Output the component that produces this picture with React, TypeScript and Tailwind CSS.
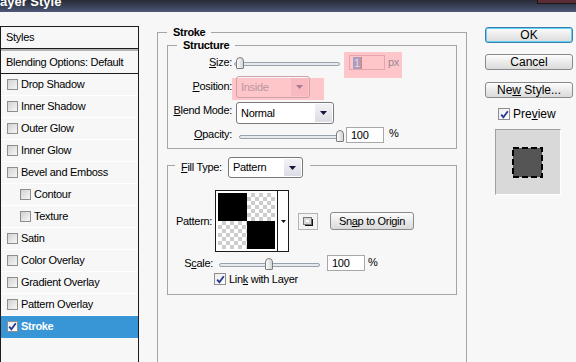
import React from "react";

function Check({ checked, className = "" }: { checked?: boolean; className?: string }) {
  return (
    <div
      className={`flex items-center justify-center border border-[#8e8e8e] ${
        checked ? "bg-linear-to-br from-[#ececec] to-[#ffffff]" : "bg-linear-to-br from-[#d2d2d2] to-[#f7f7f7]"
      } ${className}`}
    >
      {checked && (
        <svg width="9" height="9" viewBox="0 0 9 9">
          <path d="M1.2 4.6 L3.4 7.2 L7.8 1.2" fill="none" stroke="#24389a" strokeWidth="1.8" />
        </svg>
      )}
    </div>
  );
}

function Dropdown({ text, className = "", disabled }: { text: string; className?: string; disabled?: boolean }) {
  return (
    <div
      className={`flex items-stretch border rounded-[3px] ${
        disabled ? "border-[#d2a2aa] text-[#b9969f]" : "border-[#7a7a7a] bg-white"
      } ${className}`}
    >
      <div className="flex-1 flex items-center pl-[4px]">{text}</div>
      <div
        className={`w-[17px] my-[1px] mr-[1px] flex items-center justify-center ${
          disabled ? "bg-[#f9b9c1]" : "bg-linear-to-b from-[#f2f2f6] to-[#dcdce4]"
        }`}
      >
        <svg width="7" height="4" viewBox="0 0 7 4">
          <path d="M0 0 H7 L3.5 4 Z" fill={disabled ? "#a57d9a" : "#14143c"} />
        </svg>
      </div>
    </div>
  );
}

function Slider({ className, thumb }: { className: string; thumb: string }) {
  return (
    <div className={`relative h-[12px] ${className}`}>
      <div className="absolute left-0 right-0 top-[5px] h-[4px] rounded-full border border-[#97a2ad] bg-[#e6e9ed]" />
      <div
        className={`absolute top-0 w-[8px] h-[12px] rounded-t-[4px] rounded-b-[1px] border border-[#7c7c7c] bg-linear-to-r from-[#fbfbfb] to-[#d4d4d4] ${thumb}`}
      />
    </div>
  );
}

function Button({ children, className = "", focused }: { children: React.ReactNode; className?: string; focused?: boolean }) {
  return (
    <div
      className={`flex items-center justify-center rounded-[3px] border bg-linear-to-b from-[#fcfcfc] to-[#dadada] ${
        focused ? "border-[#3d7fae] shadow-[inset_0_0_0_1px_#5fd2f6]" : "border-[#8a8a8a]"
      } ${className}`}
    >
      {children}
    </div>
  );
}

const rows: { t: string; indent?: boolean; active?: boolean }[] = [
  { t: "Drop Shadow" },
  { t: "Inner Shadow" },
  { t: "Outer Glow" },
  { t: "Inner Glow" },
  { t: "Bevel and Emboss" },
  { t: "Contour", indent: true },
  { t: "Texture", indent: true },
  { t: "Satin" },
  { t: "Color Overlay" },
  { t: "Gradient Overlay" },
  { t: "Pattern Overlay" },
  { t: "Stroke", active: true },
];

export default function App() {
  return (
    <div className="w-[576px] h-[362px] overflow-hidden bg-[#f7f7f7] flex flex-col font-['Liberation_Sans',Arial,sans-serif] text-[11px] leading-[13px] text-black">
      {/* title bar */}
      <div className="h-[12px] shrink-0 bg-linear-to-b from-[#252a35] to-[#4e5877] overflow-hidden relative">
        <div className="ml-[-8px] mt-[-5px] text-[13px] leading-[13px] font-bold text-white">Layer Style</div>
        <div className="absolute right-0 top-0 w-[39px] h-[4px] bg-[#5b2b36] border-l border-b border-[#1a1a1a]" />
      </div>

      <div className="flex flex-1 min-h-0">
        {/* left panel */}
        <div className="w-[139px] mt-[14px] shrink-0 border-l border-t border-r border-[#1c1c1c] tracking-[-0.3px]">
          <div className="h-[21px] flex items-center pl-[5px]">Styles</div>
          <div className="h-[3px] border-t border-[#1c1c1c] bg-[#b4b4b4]" />
          <div className="h-[23px] border-b border-[#1c1c1c] flex items-center pl-[5px]">Blending Options: Default</div>
          {rows.map((r) => (
            <div
              key={r.t}
              className={`h-[22px] flex items-center border-b ${
                r.active ? "bg-[#3996d6] border-[#3996d6] text-white font-bold" : "border-white"
              }`}
            >
              <Check checked={r.active} className={`w-[11px] h-[11px] ${r.indent ? "ml-[19px]" : "ml-[6px]"}`} />
              <span className="ml-[3px]">{r.t}</span>
            </div>
          ))}
        </div>

        {/* middle: Stroke group */}
        <div className="ml-[18px] mt-[20px] w-[310px] h-[340px] shrink-0 border-l border-t border-r border-[#a5a5a5] relative pl-[9px] pt-[12px] tracking-[-0.3px]">
          <span className="absolute left-[9px] top-[-8px] px-[6px] bg-[#f7f7f7] font-bold leading-[14px]">Stroke</span>

          {/* Structure */}
          <div className="w-[290px] h-[104px] border border-[#a5a5a5] relative pt-[6px]">
            <span className="absolute left-[9px] top-[-8px] px-[6px] bg-[#f7f7f7] font-bold leading-[14px]">Structure</span>

            {/* Size */}
            <div className="h-[26px] flex items-start">
              <div className="w-[64px] mt-[4px] text-right">
                <u>S</u>ize:
              </div>
              <Slider className="ml-[2px] mt-[5px] w-[106px]" thumb="left-[2px]" />
              <div className="ml-[4px] w-[58px] h-[26px] bg-[#ffc6ca] flex items-start">
                <div className="ml-[5px] mt-[3px] w-[36px] h-[15px] border border-[#e3a6ae] flex items-center pl-[3px]">
                  <span className="bg-[#a99cc2] text-[#f3d4da] px-[1px] border-r border-[#e0805e] leading-[12px]">1</span>
                </div>
                <span className="ml-[3px] mt-[4px] text-[#9c8898]">px</span>
              </div>
            </div>

            {/* Position */}
            <div className="h-[22px] flex items-start">
              <div className="w-[64px] mt-[2px] text-right">
                <u>P</u>osition:
              </div>
              <div className="w-[92px] h-[22px] bg-[#ffc6ca] flex items-start">
                <Dropdown text="Inside" disabled className="ml-[4px] mt-[-2px] w-[74px] h-[22px]" />
              </div>
            </div>

            {/* Blend Mode */}
            <div className="h-[24px] flex items-start">
              <div className="w-[64px] mt-[4px] text-right">
                <u>B</u>lend Mode:
              </div>
              <Dropdown text="Normal" className="ml-[4px] mt-[2px] w-[98px] h-[22px]" />
            </div>

            {/* Opacity */}
            <div className="h-[20px] flex items-start">
              <div className="w-[64px] mt-[4px] text-right">
                <u>O</u>pacity:
              </div>
              <Slider className="ml-[7px] mt-[6px] w-[101px]" thumb="left-[97px]" />
              <div className="ml-[6px] mt-[3px] w-[38px] h-[16px] border border-[#a8a8a8] bg-white flex items-center pl-[4px]">100</div>
              <span className="ml-[5px] mt-[3px]">%</span>
            </div>
          </div>

          {/* Fill Type */}
          <div className="mt-[16px] w-[290px] h-[130px] border border-[#a5a5a5] relative pt-[24px]">
            <div className="absolute left-[7px] top-[-9px] pl-[6px] pr-[7px] bg-[#f7f7f7] flex items-center h-[21px]">
              <span className="w-[47px]">
                <u>F</u>ill Type:
              </span>
              <Dropdown text="Pattern" className="w-[75px] h-[21px]" />
            </div>

            {/* Pattern */}
            <div className="h-[62px] flex items-center">
              <span className="ml-[8px] w-[39px]">Pattern:</span>
              <div className="w-[74px] h-[62px] border border-[#1a1a1a] bg-white flex">
                <div className="w-[61px] p-[2px] grid grid-cols-2 grid-rows-2">
                  <div className="bg-black" />
                  <div className="bg-[repeating-conic-gradient(#cdcdcd_0%_25%,#ffffff_0%_50%)] bg-[length:8px_8px]" />
                  <div className="bg-[repeating-conic-gradient(#cdcdcd_0%_25%,#ffffff_0%_50%)] bg-[length:8px_8px]" />
                  <div className="bg-black" />
                </div>
                <div className="flex-1 border-l border-[#1a1a1a] flex items-center justify-center">
                  <svg width="5" height="3" viewBox="0 0 5 3">
                    <path d="M0 0 H5 L2.5 3 Z" fill="#111" />
                  </svg>
                </div>
              </div>
              <div className="ml-[9px] w-[20px] h-[17px] border border-[#b4b4b4] bg-[#f4f4f4] flex items-center justify-center">
                <svg width="10" height="9" viewBox="0 0 10 9">
                  <rect x="0.5" y="0.5" width="8" height="7" fill="#d8d8d8" stroke="#777" />
                  <rect x="3" y="3" width="3" height="2" fill="#fff" />
                  <path d="M2 8.5 H9.5 V2" fill="none" stroke="#111" strokeWidth="1.2" />
                </svg>
              </div>
              <Button className="ml-[12px] w-[84px] h-[18px]">
                <span>
                  Sn<u>a</u>p to Origin
                </span>
              </Button>
            </div>

            {/* Scale */}
            <div className="mt-[3px] h-[16px] flex items-start">
              <div className="w-[45px] mt-[2px] text-right">
                S<u>c</u>ale:
              </div>
              <Slider className="ml-[6px] mt-[3px] w-[101px]" thumb="left-[46px]" />
              <div className="ml-[7px] w-[38px] h-[16px] border border-[#a8a8a8] bg-white flex items-center pl-[4px]">100</div>
              <span className="ml-[3px] mt-[1px]">%</span>
            </div>

            {/* Link with Layer */}
            <div className="mt-[2px] h-[12px] flex items-center">
              <Check checked className="ml-[46px] w-[12px] h-[12px]" />
              <span className="ml-[3px]">
                Lin<u>k</u> with Layer
              </span>
            </div>
          </div>
        </div>

        {/* right column */}
        <div className="ml-[18px] mt-[15px] flex flex-col text-[12px] leading-[14px]">
          <Button focused className="w-[88px] h-[16px]">OK</Button>
          <Button className="mt-[11px] w-[88px] h-[16px]">Cancel</Button>
          <Button className="mt-[12px] w-[88px] h-[16px]">
            <span>
              Ne<u>w</u> Style...
            </span>
          </Button>
          <div className="mt-[10px] h-[12px] flex items-center">
            <Check checked className="ml-[13px] w-[12px] h-[12px]" />
            <span className="ml-[3px]">
              Pre<u>v</u>iew
            </span>
          </div>
          <div className="mt-[9px] ml-[10px] w-[66px] h-[66px] border-t border-l border-[#a0a0a0] border-r-white border-b-white border-r border-b bg-[#d9d9d9] flex items-start">
            <svg className="ml-[16px] mt-[17px]" width="31" height="31" viewBox="0 0 31 31">
              <rect x="1" y="1" width="29" height="29" fill="#555555" stroke="#000" strokeWidth="2" strokeDasharray="6 3" />
            </svg>
          </div>
        </div>
      </div>
    </div>
  );
}
